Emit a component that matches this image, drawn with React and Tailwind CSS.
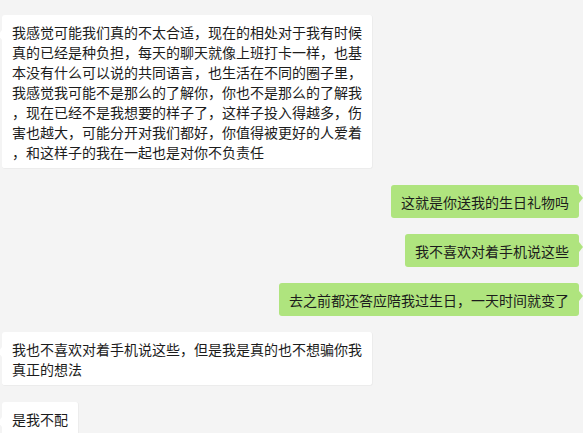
import React from 'react'

const messages = [
    {
        side: 'left',
        lines: [
            '我感觉可能我们真的不太合适，现在的相处对于我有时候',
            '真的已经是种负担，每天的聊天就像上班打卡一样，也基',
            '本没有什么可以说的共同语言，也生活在不同的圈子里，',
            '我感觉我可能不是那么的了解你，你也不是那么的了解我',
            '，现在已经不是我想要的样子了，这样子投入得越多，伤',
            '害也越大，可能分开对我们都好，你值得被更好的人爱着',
            '，和这样子的我在一起也是对你不负责任',
        ],
    },
    { side: 'right', lines: ['这就是你送我的生日礼物吗'] },
    { side: 'right', lines: ['我不喜欢对着手机说这些'] },
    { side: 'right', lines: ['去之前都还答应陪我过生日，一天时间就变了'] },
    { side: 'left', lines: ['我也不喜欢对着手机说这些，但是我是真的也不想骗你我', '真正的想法'] },
    { side: 'left', lines: ['是我不配'] },
]

function Bubble({ side, lines }) {
    const isRight = side === 'right'
    return (
        <div className={`flex ${isRight ? 'justify-end pr-[4px]' : 'justify-start pl-[2px]'}`}>
            <div
                className={`relative rounded-[3px] px-[10px] pt-[7px] pb-[6px] text-[14px] leading-[20px] text-[#1c1c1c] ${isRight ? 'bg-[#afe47e]' : 'bg-white border-r border-b border-[#ececec]'
                    }`}
            >
                {/* tail */}
                {isRight ? (
                    <span className="absolute top-[8px] -right-[4px] w-0 h-0 border-y-[5px] border-y-transparent border-l-[4px] border-l-[#afe47e]" />
                ) : (
                    <span className="absolute top-[15px] -left-[4px] w-0 h-0 border-y-[5px] border-y-transparent border-r-[4px] border-r-white" />
                )}
                {lines.map((line, i) => (
                    <span key={i} className="block whitespace-nowrap">
                        {line}
                    </span>
                ))}
            </div>
        </div>
    )
}

export default function App() {
    return (
        <div
            className="w-[583px] h-[433px] overflow-hidden bg-[#f4f4f4] pt-[15px] flex flex-col gap-4"
            style={{ fontFamily: '"Noto Sans CJK SC", "Microsoft YaHei", sans-serif' }}
        >
            {messages.map((m, i) => (
                <Bubble key={i} side={m.side} lines={m.lines} />
            ))}
        </div>
    )
}
